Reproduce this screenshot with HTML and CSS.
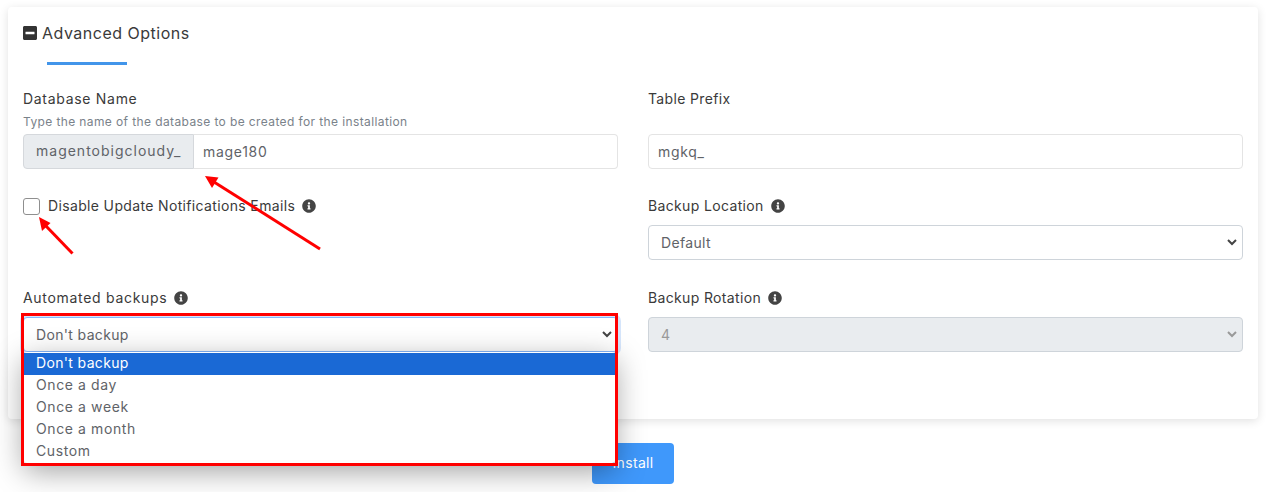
FILE: index.html
```html
<!DOCTYPE html>
<html>
<head>
    <meta charset="utf-8">
    <title>Advanced Options</title>
    <link rel="stylesheet" href="styles.css">
</head>
<body>
    <svg class="icon-defs" width="0" height="0">
        <symbol id="icon-info" viewBox="0 0 512 512">
            <path d="M256 8C119.043 8 8 119.083 8 256c0 136.997 111.043 248 248 248s248-111.003 248-248C504 119.083 392.957 8 256 8zm0 110c23.196 0 42 18.804 42 42s-18.804 42-42 42-42-18.804-42-42 18.804-42 42-42zm56 254c0 6.627-5.373 12-12 12h-88c-6.627 0-12-5.373-12-12v-24c0-6.627 5.373-12 12-12h12v-64h-12c-6.627 0-12-5.373-12-12v-24c0-6.627 5.373-12 12-12h64c6.627 0 12 5.373 12 12v100h12c6.627 0 12 5.373 12 12v24z"/>
        </symbol>
    </svg>

    <div class="page">
        <div class="card">
            <div class="card-title">
                <svg class="minus-icon" viewBox="0 0 448 512"><path d="M400 32H48C21.5 32 0 53.5 0 80v352c0 26.5 21.5 48 48 48h352c26.5 0 48-21.5 48-48V80c0-26.5-21.5-48-48-48zM92 296c-6.6 0-12-5.4-12-12v-56c0-6.6 5.4-12 12-12h264c6.6 0 12 5.4 12 12v56c0 6.6-5.4 12-12 12H92z"/></svg>
                <span>Advanced Options</span>
            </div>
            <div class="title-rule"></div>

            <div class="row row-first">
                <div class="field">
                    <label class="field-label wide">Database Name</label>
                    <div class="help">Type the name of the database to be created for the installation</div>
                    <div class="input-group">
                        <span class="addon">magentobigcloudy_</span>
                        <input class="text-input joined" type="text" value="mage180">
                    </div>
                </div>
                <div class="field">
                    <label class="field-label">Table Prefix</label>
                    <div class="help">&nbsp;</div>
                    <input class="text-input" type="text" value="mgkq_">
                </div>
            </div>

            <div class="row">
                <div class="field">
                    <label class="check-label">
                        <input class="check" type="checkbox">
                        <span>Disable Update Notifications Emails</span>
                        <svg class="info"><use href="#icon-info"/></svg>
                    </label>
                </div>
                <div class="field">
                    <label class="field-label">Backup Location <svg class="info"><use href="#icon-info"/></svg></label>
                    <select class="select">
                        <option>Default</option>
                    </select>
                </div>
            </div>

            <div class="row row-last">
                <div class="field">
                    <label class="field-label wide">Automated backups <svg class="info"><use href="#icon-info"/></svg></label>
                    <div class="dropdown-wrap">
                        <select class="select focused">
                            <option>Don't backup</option>
                        </select>
                        <ul class="dropdown">
                            <li class="selected">Don't backup</li>
                            <li>Once a day</li>
                            <li>Once a week</li>
                            <li>Once a month</li>
                            <li>Custom</li>
                        </ul>
                        <div class="red-box"></div>
                    </div>
                </div>
                <div class="field">
                    <label class="field-label">Backup Rotation <svg class="info"><use href="#icon-info"/></svg></label>
                    <select class="select" disabled>
                        <option>4</option>
                    </select>
                </div>
            </div>
        </div>

        <div class="actions">
            <button class="install-btn">Install</button>
        </div>

        <!-- annotation arrows drawn on top of the screenshot -->
        <svg class="arrows" width="1287" height="492" viewBox="0 0 1287 492">
            <g fill="#f00" stroke="none">
                <polygon points="205,176 218.500,177.500 212,188"/>
                <polygon points="39,217 50.500,223 42,231"/>
            </g>
            <g stroke="#f00" stroke-width="3" fill="none">
                <line x1="320" y1="249" x2="214" y2="182"/>
                <line x1="72.500" y1="253.500" x2="45" y2="225"/>
            </g>
        </svg>
    </div>
</body>
</html>
```

FILE: styles.css
```css
* {
    box-sizing: border-box;
}
html, body {
    margin: 0;
    height: 100%;
    overflow: hidden;
}
body {
    background: #fff;
    color: #333;
    font: 14px Inter, "Noto Sans", sans-serif;
    letter-spacing: 0.35px;
}
.icon-defs {
    display: block;
    height: 0;
}
.page {
    position: relative;
    width: 1287px;
    height: 492px;
    padding: 7px 29px 0 8px;
    overflow: hidden;
}
.card {
    height: 412px;
    padding: 15px;
    background: #fff;
    border-radius: 4px;
    box-shadow: 0 2px 10px rgba(0, 0, 0, 0.12);
}
.card-title {
    display: flex;
    align-items: center;
    gap: 5px;
    height: 22px;
    font-size: 16px;
    letter-spacing: 0.5px;
    color: #3a3a3a;
}
.minus-icon {
    width: 14px;
    height: 16px;
    fill: #333;
}
.title-rule {
    width: 80px;
    height: 3px;
    margin: 18px 0 24px 24px;
    background: #4295ea;
}
.row {
    display: grid;
    grid-template-columns: 595px 595px;
    column-gap: 30px;
    margin-bottom: 28px;
}
.row-first {
    margin-bottom: 27px;
}
.row-last {
    margin-bottom: 0;
}
.field-label {
    display: flex;
    align-items: center;
    gap: 7px;
    height: 20px;
    padding-bottom: 2px;
    margin-bottom: 9px;
    color: #3a3a3a;
}
.field-label.wide {
    letter-spacing: 0.7px;
}
.help {
    height: 20px;
    margin: -6px 0 2px;
    font-size: 12px;
    line-height: 20px;
    letter-spacing: 0.39px;
    color: #7a828a;
}
.info {
    width: 14px;
    height: 14px;
    margin-top: 2px;
    fill: #444;
    flex: none;
}
.input-group {
    display: flex;
    height: 35px;
}
.addon {
    flex: none;
    width: 171px;
    padding: 0 12px;
    line-height: 32px;
    letter-spacing: 1px;
    color: #5f6368;
    background: #e9ecef;
    border: 1px solid #d5d8dc;
    border-radius: 4px 0 0 4px;
}
.text-input {
    display: block;
    width: 100%;
    height: 35px;
    padding: 0 9px 1px;
    font: inherit;
    letter-spacing: 0.7px;
    color: #5f6368;
    background: #fff;
    border: 1px solid #e4e4e4;
    border-radius: 4px;
}
.text-input.joined {
    border-left: none;
    border-radius: 0 4px 4px 0;
}
.check-label {
    display: flex;
    align-items: center;
    gap: 7px;
    height: 20px;
    color: #3a3a3a;
}
.check-label span {
    padding-bottom: 2px;
    letter-spacing: 0.35px;
}
.check-label .info {
    margin-top: 0;
}
.check {
    appearance: none;
    width: 17px;
    height: 17px;
    margin: 0 1px 0 0;
    background: #fff;
    border: 1px solid #8f8f8f;
    border-radius: 3px;
}
.select {
    display: block;
    width: 100%;
    height: 35px;
    padding: 0 12px;
    font: inherit;
    letter-spacing: inherit;
    color: #5f6368;
    background: #fff url("data:image/svg+xml,%3Csvg xmlns='http://www.w3.org/2000/svg' width='10' height='7'%3E%3Cpath d='M1 1l4 4 4-4' fill='none' stroke='%23444' stroke-width='2'/%3E%3C/svg%3E") no-repeat right 5px center;
    border: 1px solid #ced4da;
    border-radius: 4px;
    appearance: none;
}
.select:disabled {
    color: #999;
    opacity: 1;
    background-color: #e9ecef;
    background-image: url("data:image/svg+xml,%3Csvg xmlns='http://www.w3.org/2000/svg' width='10' height='7'%3E%3Cpath d='M1 1l4 4 4-4' fill='none' stroke='%23999' stroke-width='2'/%3E%3C/svg%3E");
}
.select.focused {
    border-color: #86b7fe;
    box-shadow: 0 0 0 3px #d5e5fb;
}
.dropdown-wrap {
    position: relative;
    height: 35px;
}
.dropdown {
    position: absolute;
    top: 35px;
    left: 1px;
    width: 591px;
    height: 111px;
    margin: 0;
    padding: 1px 0 0;
    list-style: none;
    letter-spacing: 0.6px;
    color: #5f6368;
    background: #fff;
    border-radius: 3px;
    box-shadow: 0 8px 30px rgba(0, 0, 0, 0.38);
}
.dropdown li {
    height: 22px;
    padding: 0 12px 2px;
    line-height: 20px;
}
.dropdown li.selected {
    letter-spacing: 0.35px;
    color: #fff;
    background: #1a69d5;
}
.red-box {
    position: absolute;
    top: -4px;
    left: -2px;
    width: 597px;
    height: 153px;
    border: 3px solid #f00;
    pointer-events: none;
}
.actions {
    display: flex;
    justify-content: center;
    width: 1250px;
    margin-top: 24px;
}
.install-btn {
    width: 82px;
    height: 41px;
    padding: 0 0 2px;
    font: inherit;
    letter-spacing: inherit;
    color: #fff;
    background: #3f98fb;
    border: none;
    border-radius: 4px;
}
.arrows {
    position: absolute;
    top: 0;
    left: 0;
    pointer-events: none;
}
```
